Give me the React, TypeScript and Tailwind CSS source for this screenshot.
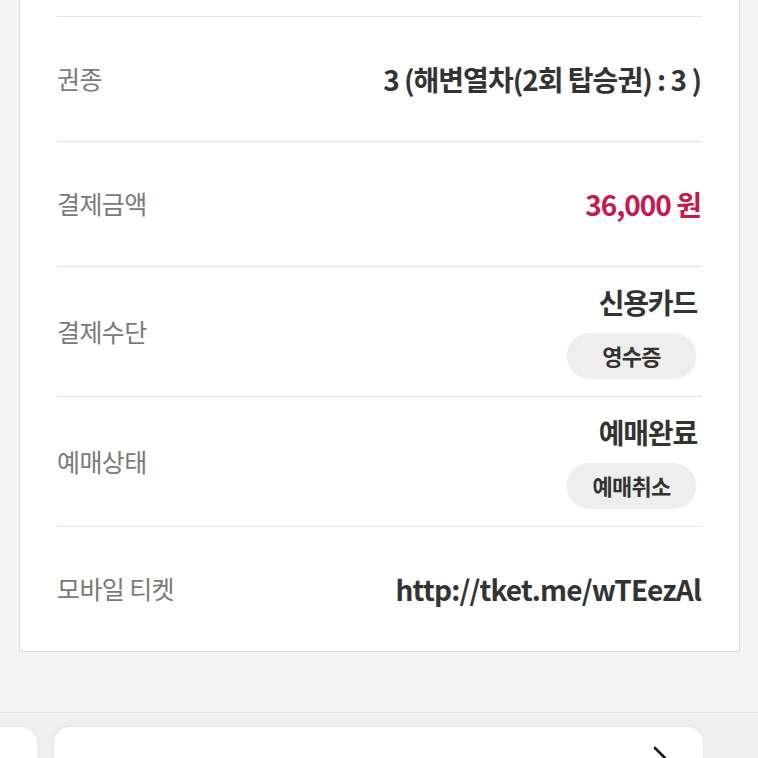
const rows = [
  { label: "권종", value: "3 (해변열차(2회 탑승권) : 3 )", h: "h-[125px]" },
  { label: "결제금액", value: "36,000 원", h: "h-[125px]", price: true },
];

function Row({ label, children, h }: { label: string; children: React.ReactNode; h: string }) {
  return (
    <div className={`flex items-center justify-between border-t border-[#e3e3e3] ${h}`}>
      <span className="text-[25px] tracking-[-0.6px] text-[#7a7a7a]">{label}</span>
      {children}
    </div>
  );
}

function Pill({ text }: { text: string }) {
  return (
    <button className="flex h-[45px] w-[129px] items-center justify-center rounded-full bg-[#eeeeee] text-[22px] font-bold tracking-[-0.8px] text-[#333] shadow-[0_1px_2px_rgba(0,0,0,0.08)]">
      {text}
    </button>
  );
}

export default function App() {
  return (
    <div
      className="h-[758px] w-[758px] overflow-hidden bg-[#f4f4f4]"
      style={{ fontFamily: '"Noto Sans CJK KR", "Noto Sans", sans-serif' }}
    >
      {/* detail card */}
      <div className="ml-[19px] w-[721px] border border-t-0 border-[#dcdcdc] bg-white px-[37px]">
        <div className="h-[16px]" />
        {rows.map((r) => (
          <Row key={r.label} label={r.label} h={r.h}>
            <span
              className={`pr-[1px] text-[28px] font-bold tracking-[-1px] ${r.price ? "text-[#c41a4e]" : "text-[#333]"}`}
            >
              {r.value}
            </span>
          </Row>
        ))}
        <Row label="결제수단" h="h-[130px]">
          <div className="flex flex-col items-end gap-[14px] pr-[5px]">
            <span className="text-[28px] leading-[34px] font-bold tracking-[-1.2px] text-[#333]">신용카드</span>
            <div className="pr-[1px]">
              <Pill text="영수증" />
            </div>
          </div>
        </Row>
        <Row label="예매상태" h="h-[130px]">
          <div className="flex flex-col items-end gap-[14px] pr-[5px]">
            <span className="text-[28px] leading-[34px] font-bold tracking-[-1.2px] text-[#333]">예매완료</span>
            <div className="pr-[1px]">
              <Pill text="예매취소" />
            </div>
          </div>
        </Row>
        <Row label="모바일 티켓" h="h-[125px]">
          <span className="pr-[1px] text-[28px] font-bold tracking-[-0.8px] text-[#333]">http://tket.me/wTEezAl</span>
        </Row>
      </div>

      {/* bottom carousel */}
      <div className="mt-[60px] h-[200px] border-t border-[#e2e2e2] bg-[#f0f0f0] pt-[14px]">
        <div className="flex gap-[17px]">
          <div className="h-[100px] w-[37px] rounded-tr-2xl bg-white shadow-[0_0_6px_rgba(0,0,0,0.06)]" />
          <div className="relative h-[100px] w-[649px] rounded-t-2xl bg-white shadow-[0_0_6px_rgba(0,0,0,0.06)]">
            <svg className="absolute left-[598px] top-[18px]" width="16" height="26" viewBox="0 0 16 26" fill="none">
              <path d="M3 3 L13 13 L3 23" stroke="#111" strokeWidth="2.6" strokeLinecap="round" strokeLinejoin="round" />
            </svg>
          </div>
        </div>
      </div>
    </div>
  );
}
